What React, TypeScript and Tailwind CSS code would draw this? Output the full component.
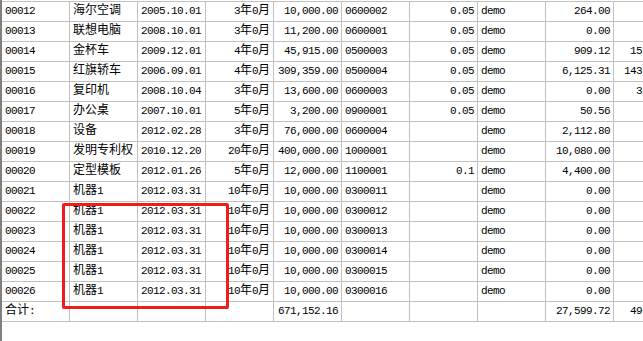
import React from "react";

type Row = {
  id: string;
  name: string;
  date: string;
  life: string;
  amount: string;
  code: string;
  rate: string;
  user: string;
  depr: string;
  extra: string;
};

const rows: Row[] = [
  { id: "00012", name: "海尔空调", date: "2005.10.01", life: "3年0月", amount: "10,000.00", code: "0600002", rate: "0.05", user: "demo", depr: "264.00", extra: "" },
  { id: "00013", name: "联想电脑", date: "2008.10.01", life: "3年0月", amount: "11,200.00", code: "0600001", rate: "0.05", user: "demo", depr: "0.00", extra: "" },
  { id: "00014", name: "金杯车", date: "2009.12.01", life: "4年0月", amount: "45,915.00", code: "0500003", rate: "0.05", user: "demo", depr: "909.12", extra: "15" },
  { id: "00015", name: "红旗轿车", date: "2006.09.01", life: "4年0月", amount: "309,359.00", code: "0500004", rate: "0.05", user: "demo", depr: "6,125.31", extra: "143" },
  { id: "00016", name: "复印机", date: "2008.10.04", life: "3年0月", amount: "13,600.00", code: "0600003", rate: "0.05", user: "demo", depr: "0.00", extra: "3" },
  { id: "00017", name: "办公桌", date: "2007.10.01", life: "5年0月", amount: "3,200.00", code: "0900001", rate: "0.05", user: "demo", depr: "50.56", extra: "" },
  { id: "00018", name: "设备", date: "2012.02.28", life: "3年0月", amount: "76,000.00", code: "0600004", rate: "", user: "demo", depr: "2,112.80", extra: "" },
  { id: "00019", name: "发明专利权", date: "2010.12.20", life: "20年0月", amount: "400,000.00", code: "1000001", rate: "", user: "demo", depr: "10,080.00", extra: "" },
  { id: "00020", name: "定型模板", date: "2012.01.26", life: "5年0月", amount: "12,000.00", code: "1100001", rate: "0.1", user: "demo", depr: "4,400.00", extra: "" },
  { id: "00021", name: "机器1", date: "2012.03.31", life: "10年0月", amount: "10,000.00", code: "0300011", rate: "", user: "demo", depr: "0.00", extra: "" },
  { id: "00022", name: "机器1", date: "2012.03.31", life: "10年0月", amount: "10,000.00", code: "0300012", rate: "", user: "demo", depr: "0.00", extra: "" },
  { id: "00023", name: "机器1", date: "2012.03.31", life: "10年0月", amount: "10,000.00", code: "0300013", rate: "", user: "demo", depr: "0.00", extra: "" },
  { id: "00024", name: "机器1", date: "2012.03.31", life: "10年0月", amount: "10,000.00", code: "0300014", rate: "", user: "demo", depr: "0.00", extra: "" },
  { id: "00025", name: "机器1", date: "2012.03.31", life: "10年0月", amount: "10,000.00", code: "0300015", rate: "", user: "demo", depr: "0.00", extra: "" },
  { id: "00026", name: "机器1", date: "2012.03.31", life: "10年0月", amount: "10,000.00", code: "0300016", rate: "", user: "demo", depr: "0.00", extra: "" },
];

// CJK glyphs are full width (12px), latin ones half width (6px), like SimSun
const Txt = ({ value }: { value: string }) => {
  const parts = value.split(/([\u3000-\u9fff]+)/).filter(Boolean);
  return (
    <>
      {parts.map((p, i) =>
        /[\u3000-\u9fff]/.test(p) ? (
          <span key={i} className="text-[12px] tracking-normal">
            {p}
          </span>
        ) : (
          <span key={i}>{p}</span>
        ),
      )}
    </>
  );
};

const Cell = ({
  value,
  right,
  last,
}: {
  value: string;
  right?: boolean;
  last?: boolean;
}) => (
  <div
    className={`h-full shrink-0 overflow-hidden whitespace-nowrap ${
      last
        ? "w-[29px] pr-px text-right"
        : `w-[68px] border-r border-[#c0c0c0] ${right ? "px-[3px] text-right" : "pl-[3px]"}`
    }`}
  >
    <Txt value={value} />
  </div>
);

export default function App() {
  return (
    <div className="relative h-[341px] w-[643px] overflow-hidden bg-white">
      <div className="h-full border-l-2 border-[#808080] pt-px">
        <div
          className="border-t border-[#c0c0c0] text-[11px] leading-[19px] tracking-[-0.6px] text-black"
          style={{ fontFamily: '"Liberation Mono", "Noto Sans CJK SC", monospace' }}
        >
          {rows.map((r) => (
            <div key={r.id} className="flex h-[20px] border-b border-[#c0c0c0]">
              <Cell value={r.id} />
              <Cell value={r.name} />
              <Cell value={r.date} />
              <Cell value={r.life} right />
              <Cell value={r.amount} right />
              <Cell value={r.code} />
              <Cell value={r.rate} right />
              <Cell value={r.user} />
              <Cell value={r.depr} right />
              <Cell value={r.extra} last />
            </div>
          ))}
          <div className="flex h-[20px] border-b border-[#c0c0c0]">
            <Cell value="合计:" />
            <Cell value="" />
            <Cell value="" />
            <Cell value="" />
            <Cell value="671,152.16" right />
            <Cell value="" />
            <Cell value="" />
            <Cell value="" />
            <Cell value="27,599.72" right />
            <Cell value="49" last />
          </div>
        </div>
      </div>
      <div className="absolute left-[62px] top-[203px] h-[106px] w-[167px] rounded-[2px] border-[3px] border-[#f01c1c]" />
    </div>
  );
}
